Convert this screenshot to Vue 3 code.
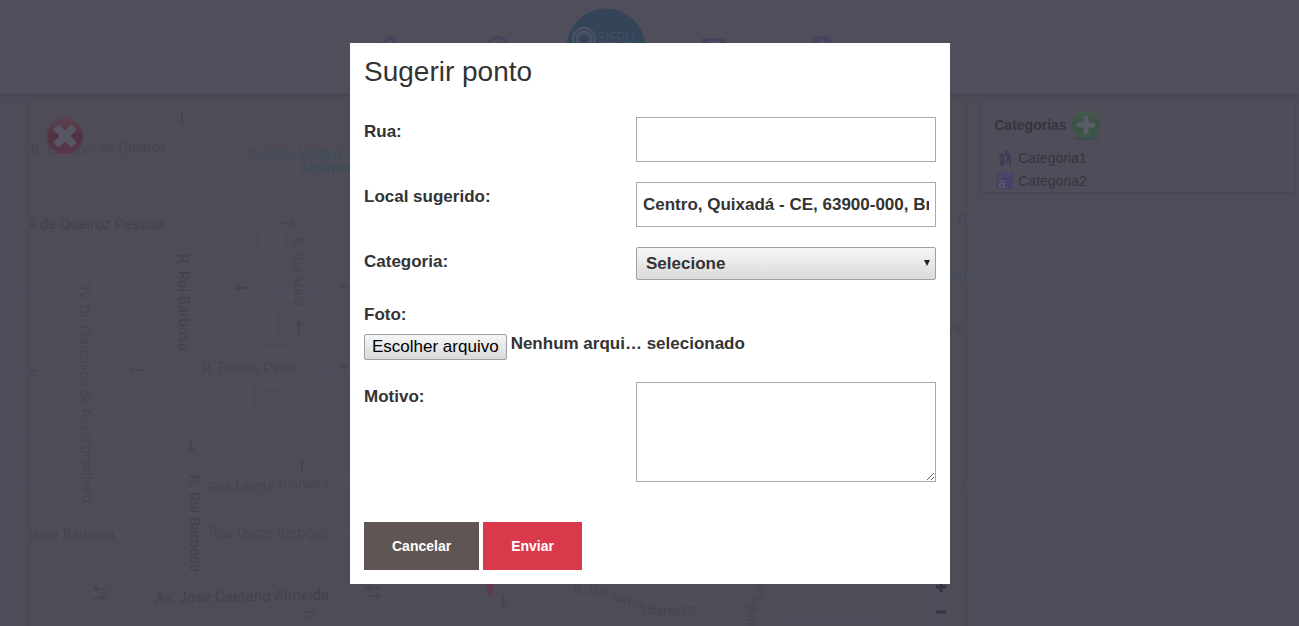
<script setup>
import { ref } from 'vue'

const street = ref('')
const place = ref('Centro, Quixadá - CE, 63900-000, Brasil')
const category = ref('')
const reason = ref('')
const categories = ['Categoria1', 'Categoria2']

const streets = [
  { text: 'R. Eusébio de Queirós', x: 1, y: 53, angle: -1, size: 14, tone: 'faint' },
  { text: 'é de Queiroz Pessoa', x: -2, y: 128, angle: 0, size: 15, tone: 'road' },
  { text: 'R. Basílio Pinto', x: 172, y: 272, angle: 0, size: 14, tone: 'faint' },
  { text: 'Rua Laerte Pinheiro', x: 178, y: 391, angle: -2, size: 14, tone: 'faint' },
  { text: 'Oscar Barbosa', x: -7, y: 439, angle: 0, size: 14, tone: 'faint' },
  { text: 'Rua Oscar Barbosa', x: 179, y: 437, angle: 0, size: 14, tone: 'faint' },
  { text: 'Av. José Caetano Almeida', x: 125, y: 502, angle: -1, size: 15, tone: 'road' },
  { text: 'R. Rui Barbosa', x: 148, y: 153, angle: 89, size: 15, tone: 'road' },
  { text: 'R. Rui Barbosa', x: 159, y: 374, angle: 89, size: 15, tone: 'road' },
  { text: 'R. Rui Maia', x: 263, y: 136, angle: 89, size: 14, tone: 'faint' },
  { text: 'Tv. Dr. Francisco de Assis brasileiro', x: 49, y: 183, angle: 89, size: 14, tone: 'faint' },
  { text: 'R.', x: 274, y: 509, angle: 89, size: 14, tone: 'faint' },
  { text: 'uvêncio', x: 723, y: 526, angle: -76, size: 14, tone: 'faint' },
  { text: 'Colégio Valdemar', x: 218, y: 58, angle: 0, size: 14, tone: 'place' },
  { text: 'Alcântara', x: 269, y: 72, angle: 0, size: 14, tone: 'place' },
  { text: 'R', x: 928, y: 123, angle: 0, size: 14, tone: 'faint' },
  { text: 'aç', x: 921, y: 180, angle: 0, size: 14, tone: 'place' },
  { text: 'nic', x: 919, y: 233, angle: 0, size: 14, tone: 'faint' },
  { text: 'R', x: 931, y: 390, angle: 0, size: 14, tone: 'faint' },
]

const arrows = [
  { x: 152, y: 18, angle: 90 }, { x: 258, y: 122, angle: 0 },
  { x: 212, y: 187, angle: 180 }, { x: 317, y: 185, angle: 180 },
  { x: 0, y: 270, angle: 180 },
  { x: 106, y: 269, angle: 180 }, { x: 318, y: 266, angle: 180 },
  { x: 269, y: 226, angle: 270 }, { x: 161, y: 345, angle: 90 },
  { x: 272, y: 366, angle: 270 }, { x: 70, y: 488, angle: 180 },
  { x: 69, y: 497, angle: 0 }, { x: 343, y: 487, angle: 180 },
  { x: 344, y: 495, angle: 0 }, { x: 473, y: 501, angle: 90 },
]
</script>

<template>
  <div class="page">
    <header class="topbar">
      <nav class="nav">
        <a href="#" aria-label="Início">
          <svg width="26" height="26" viewBox="0 0 26 26" fill="none" stroke="#45445f" stroke-width="3"><path d="M2 13 13 2l11 11M6 10v14h14V10M10 14l3-3 3 3" /></svg>
        </a>
        <a href="#" aria-label="Horários">
          <svg width="26" height="26" viewBox="0 0 26 26" fill="none" stroke="#45445f" stroke-width="3"><circle cx="13" cy="13" r="10.5" /><path d="M13 6v8l5 3" /></svg>
        </a>
        <a href="#" class="logo" aria-label="SISPU">
          <svg width="80" height="80" viewBox="0 0 80 80">
            <circle cx="40" cy="40" r="39.5" fill="#34455a" />
            <circle cx="18" cy="31" r="11" fill="none" stroke="#4d5364" stroke-width="2" />
            <circle cx="18" cy="31" r="7" fill="none" stroke="#4d5364" stroke-width="3" />
            <path d="m9 38 9 18 10-18" fill="#4d5364" />
            <text x="32" y="35" class="logo-text">SISPU</text>
          </svg>
        </a>
        <a href="#" aria-label="Contato">
          <svg width="26" height="26" viewBox="0 0 26 26" fill="none" stroke="#45445f" stroke-width="3"><path d="M2.500 4.500h21v17h-21zM3 5l10 9L23 5" /></svg>
        </a>
        <a href="#" aria-label="Locais">
          <svg width="26" height="26" viewBox="0 0 26 26" fill="none" stroke="#45445f" stroke-width="5"><circle cx="13" cy="12" r="9" /><path d="M13 21v5" /></svg>
        </a>
      </nav>
    </header>

    <main class="content">
      <section class="map">
        <svg class="map-art" width="100%" height="100%">
          <g fill="none" stroke="#4e4d59" stroke-width="7">
            <path d="M0 189h300M0 270q90-4 200-2h140M0 333h155M0 381h170q90 2 170-3M0 433h340" />
            <path d="M55 0v160l-2 120 4 150 8 80M261 0l9 110v160l4 150 5 100M156 300l9 226" />
            <path d="M490 501h120q90 0 140 18h100" />
          </g>
          <g fill="none" stroke="#524c56">
            <path d="M146 0v115H0M0 285h90v42H12M155 280l4 70 2 110H0M240 48v68M302 208v50h31v-46zM20 450h110M185 455h150M880 490l6 36" />
          </g>
          <g fill="none" stroke="#504e5a" stroke-width="5">
            <path d="M232 128h20v16h-20zM282 128h20M245 195h44M244 210v28M227 250h35M277 275h28M220 278v28M232 284h22" />
          </g>
          <g v-for="(a, i) in arrows" :key="i" :transform="`translate(${a.x} ${a.y}) rotate(${a.angle})`">
            <path d="M-7 0H4M3-2 6 0 3 2z" fill="#464553" stroke="#464553" stroke-width="2" />
          </g>
          <text
            v-for="(s, i) in streets" :key="s.text + i" :class="s.tone" :font-size="s.size"
            :transform="`translate(${s.x} ${s.y}) rotate(${s.angle})`"
          >{{ s.text }}</text>
          <path id="benjamin" d="M543 493q34-1 72 19 20 5 60-1" fill="none" />
          <text class="faint" font-size="14"><textPath href="#benjamin">R. Benjamin Barroso</textPath></text>
          <path d="M455 477h10l-5 21z" fill="#63364a" />
        </svg>
        <button class="map-close" type="button" aria-label="Fechar">
          <svg width="38" height="38" viewBox="0 0 38 38">
            <defs>
              <linearGradient id="red" x2="0" y2="1"><stop stop-color="#5d4252" /><stop offset=".5" stop-color="#503341" /><stop offset="1" stop-color="#5b364c" /></linearGradient>
            </defs>
            <circle cx="19" cy="19" r="18" fill="url(#red)" stroke="#573f4d" />
            <path d="m10 10 18 18M28 10 10 28" stroke="#575663" stroke-width="8" />
          </svg>
        </button>
        <div class="zoom">
          <button type="button" aria-label="Aproximar"><svg width="12" height="12"><path d="M1 6h10M6 1v10" /></svg></button>
          <button type="button" aria-label="Afastar"><svg width="12" height="12"><path d="M1 6h10" /></svg></button>
        </div>
      </section>

      <aside class="panel">
        <div class="panel-head">
          <h2>Categorias</h2>
          <button type="button" aria-label="Adicionar">
            <svg width="30" height="30" viewBox="0 0 30 30">
              <defs><linearGradient id="green" x2="0" y2="1"><stop stop-color="#465b4c" /><stop offset=".5" stop-color="#3a5045" /><stop offset="1" stop-color="#3a5a4a" /></linearGradient></defs>
              <ellipse cx="15" cy="28" rx="13" ry="2" fill="#474753" />
              <circle cx="15" cy="14.500" r="14" fill="url(#green)" />
              <path d="M15 8v14M8 15h14" stroke="#585d67" stroke-width="5" stroke-linecap="round" />
            </svg>
          </button>
        </div>
        <ul>
          <li>
            <svg width="16" height="16" viewBox="0 0 16 16" fill="#3e3b57"><circle cx="9" cy="1.500" r="1.500" /><path d="M9 3h3l2 4v8h-1l-2-5-1 5H9l1-8-1-2-4 1V5zM2 6l1-2h3l2 2v2H2zM2.500 9H8l-1 7H3.500z" /></svg>
            Categoria1
          </li>
          <li>
            <svg width="16" height="16" viewBox="0 0 16 16"><path d="M0 0h16v16H0z" fill="#434265" /><path d="m3 0 3 4M8 0v4M14 1l-4 3M9 7l7 6M0 4h5" stroke="#55546d" /><text x="1" y="15" class="mark">a</text></svg>
            Categoria2
          </li>
        </ul>
      </aside>
    </main>

    <div class="overlay">
      <form class="dialog" role="dialog" aria-labelledby="dialog-title" @submit.prevent>
        <h1 id="dialog-title">Sugerir ponto</h1>
        <div class="row">
          <label for="street">Rua:</label>
          <input id="street" v-model="street" class="field" type="text">
        </div>
        <div class="row">
          <label for="place">Local sugerido:</label>
          <input id="place" v-model="place" class="field" type="text">
        </div>
        <div class="row">
          <label for="category">Categoria:</label>
          <div class="select">
            <select id="category" v-model="category">
              <option value="">Selecione</option>
              <option v-for="c in categories" :key="c">{{ c }}</option>
            </select>
            <svg width="6" height="6" viewBox="0 0 6 6"><path d="M0 0h6L3 6z" fill="#222" /></svg>
          </div>
        </div>
        <div class="file-group">
          <label for="photo">Foto:</label>
          <div class="file">
            <label for="photo" class="file-button">Escolher arquivo</label>
            <span>Nenhum arqui… selecionado</span>
            <input id="photo" type="file">
          </div>
        </div>
        <div class="row">
          <label for="reason">Motivo:</label>
          <textarea id="reason" v-model="reason" class="field area"></textarea>
        </div>
        <div class="actions">
          <button type="button" class="cancel">Cancelar</button>
          <button type="submit" class="send">Enviar</button>
        </div>
      </form>
    </div>
  </div>
</template>

<style>
body { background: #4c4d59; }
</style>

<style scoped>
.page {
  display: flex;
  flex-direction: column;
  height: 100vh;
  overflow: hidden;
  font-family: "Liberation Sans", Arial, sans-serif;
  color: #333;
}
.page * { box-sizing: border-box; }
h1, h2, ul { margin: 0; padding: 0; }
button { font-family: inherit; cursor: pointer; }

.topbar {
  flex: none;
  height: 94px;
  padding: 8px 87px 0 0;
  background: #4f4e5a;
  box-shadow: 0 1px 3px #3f3f4b;
}
.nav {
  display: grid;
  grid-template-columns: repeat(5, 108px);
  justify-content: center;
  justify-items: center;
}
.nav a { display: block; padding-top: 27px; }
.nav .logo { padding: 0; }
.nav svg { display: block; }
.logo-text { font-family: "Open Sans", sans-serif; font-size: 14px; font-weight: 300; fill: #4d5364; }

.content {
  flex: 1;
  display: grid;
  grid-template-columns: 3fr 1fr;
  align-items: start;
  gap: 17px;
  min-height: 0;
  padding: 7px 5px 0 30px;
}
.map {
  position: relative;
  height: 100%;
  background: #4f4c58;
  box-shadow: 0 0 3px #444450;
}
.map-art { display: block; overflow: hidden; font-family: Roboto, sans-serif; }
.faint { fill: #464551; }
.road { fill: #43424c; }
.place { fill: #3a4d58; }
.map-close, .panel-head button, .zoom button { display: block; padding: 0; border: 0; background: none; }
.map-close { position: absolute; top: 16px; left: 16px; }
.map-close svg { display: block; }
.zoom { position: absolute; right: 9px; bottom: 0; width: 30px; background: #4e4e5b; }
.zoom button { width: 100%; height: 25px; }
.zoom path { stroke: #343442; stroke-width: 3; }

.panel {
  min-width: 0;
  padding: 8px 12px 0;
  background: #4e4d59;
  box-shadow: 0 1px 3px #42424e;
  font-size: 14px;
  color: #363541;
}
.panel-head { display: flex; align-items: center; gap: 4px; height: 32px; }
.panel-head svg { display: block; }
h2 { font-size: 14px; }
ul { list-style: none; padding: 5px 0 0 3px; }
li { display: flex; align-items: center; gap: 5px; height: 23px; }
.mark { font-size: 14px; font-weight: 700; fill: #5b5970; }

.overlay {
  position: fixed;
  inset: 0;
  display: flex;
  align-items: center;
  justify-content: center;
  padding: 1px 0 0 1px;
}
.dialog {
  display: flex;
  flex-direction: column;
  gap: 20px;
  width: 600px;
  max-width: 100%;
  padding: 14px;
  background: #fff;
  font-size: 17px;
  font-weight: 700;
}
h1 { margin-bottom: 10px; font-size: 28px; font-weight: 400; line-height: 30px; }
.row { display: flex; justify-content: space-between; align-items: flex-start; }
.row > label, .file-group > label { display: block; line-height: 30px; }
.field {
  display: block;
  width: 300px;
  height: 45px;
  padding: 0 6px;
  border: 1px solid #a9a9a9;
  border-radius: 0;
  background: #fff;
  font: inherit;
  color: inherit;
}
.area { height: 100px; padding: 6px; resize: both; }
.select { position: relative; width: 300px; }
select {
  display: block;
  width: 100%;
  height: 33px;
  padding: 0 20px 0 9px;
  border: 1px solid #a0a0a0;
  border-radius: 2px;
  background: linear-gradient(#f6f6f6, #dadada);
  font: inherit;
  color: inherit;
  appearance: none;
}
.select svg { position: absolute; right: 6px; top: 13px; pointer-events: none; }
.file-group { padding-bottom: 2px; }
.file { position: relative; display: flex; gap: 4px; padding-top: 4px; line-height: 19px; }
.file-button {
  height: 26px;
  padding: 0 7px;
  border: 1px solid #a0a0a0;
  border-radius: 2px;
  background: linear-gradient(#f6f6f6, #dadada);
  font-weight: 400;
  line-height: 24px;
  color: #000;
}
.file input { position: absolute; inset: 0; width: 100%; opacity: 0; }
.actions { display: flex; gap: 4px; padding-top: 20px; }
.actions button {
  height: 48px;
  padding: 0 28px;
  border: 0;
  font-size: 14px;
  font-weight: 700;
  color: #fff;
}
.actions .cancel { background: #5f5654; }
.actions .send { background: #da394b; }
</style>
